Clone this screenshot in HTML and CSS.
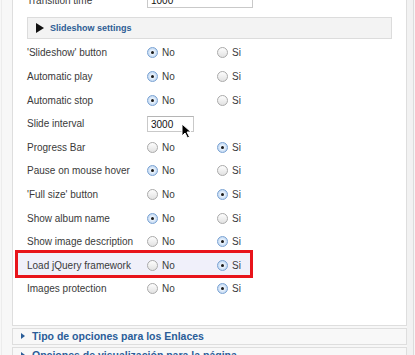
FILE: index.html
```html
<!DOCTYPE html>
<html lang="en">
<head>
    <meta charset="UTF-8">
    <meta name="viewport" content="width=device-width, initial-scale=1.0">
    <title>Slideshow settings</title>
    <link rel="stylesheet" href="styles.css">
</head>
<body>
    <div id='page'>
        <div class='gutter'></div>
        <div id='main'>
            <div class='panel'>
                <div class='row row-top'>
                    <span class='label'>Transition time</span>
                    <span class='field wide'>1000</span>
                </div>
                <div class='section-bar'><span class='tri'></span>Slideshow settings</div>
                <div class='rows'>
                    <div class='row'>
                        <span class='label'>'Slideshow' button</span>
                        <span class='opt'><span class='radio on'></span>No</span>
                        <span class='opt'><span class='radio'></span>Si</span>
                    </div>
                    <div class='row'>
                        <span class='label'>Automatic play</span>
                        <span class='opt'><span class='radio on'></span>No</span>
                        <span class='opt'><span class='radio'></span>Si</span>
                    </div>
                    <div class='row'>
                        <span class='label'>Automatic stop</span>
                        <span class='opt'><span class='radio on'></span>No</span>
                        <span class='opt'><span class='radio'></span>Si</span>
                    </div>
                    <div class='row'>
                        <span class='label'>Slide interval</span>
                        <span class='field short'>3000</span>
                        <svg class='cursor' width='11' height='16' viewBox='0 0 11 16'>
                            <path d='M1 1 L1 13 L4 10 L6.5 15 L8.5 14 L6 9 L10 9 Z' fill='#000' stroke='#fff' stroke-width='1'/>
                        </svg>
                    </div>
                    <div class='row'>
                        <span class='label'>Progress Bar</span>
                        <span class='opt'><span class='radio'></span>No</span>
                        <span class='opt'><span class='radio on'></span>Si</span>
                    </div>
                    <div class='row'>
                        <span class='label'>Pause on mouse hover</span>
                        <span class='opt'><span class='radio on'></span>No</span>
                        <span class='opt'><span class='radio'></span>Si</span>
                    </div>
                    <div class='row'>
                        <span class='label'>'Full size' button</span>
                        <span class='opt'><span class='radio'></span>No</span>
                        <span class='opt'><span class='radio on'></span>Si</span>
                    </div>
                    <div class='row'>
                        <span class='label'>Show album name</span>
                        <span class='opt'><span class='radio on'></span>No</span>
                        <span class='opt'><span class='radio'></span>Si</span>
                    </div>
                    <div class='row'>
                        <span class='label'>Show image description</span>
                        <span class='opt'><span class='radio'></span>No</span>
                        <span class='opt'><span class='radio on'></span>Si</span>
                    </div>
                    <div class='row marked'>
                        <span class='mark'></span>
                        <span class='label'>Load jQuery framework</span>
                        <span class='opt'><span class='radio'></span>No</span>
                        <span class='opt'><span class='radio on'></span>Si</span>
                    </div>
                    <div class='row'>
                        <span class='label'>Images protection</span>
                        <span class='opt'><span class='radio'></span>No</span>
                        <span class='opt'><span class='radio on'></span>Si</span>
                    </div>
                </div>
            </div>
            <div class='fold'><span class='tri-small'></span>Tipo de opciones para los Enlaces</div>
            <div class='fold'><span class='tri-small'></span>Opciones de visualización para la página</div>
        </div>
        <div class='side'></div>
    </div>
</body>
</html>
```

FILE: styles.css
```css
*{
    margin: 0;
    padding: 0;
    box-sizing: border-box;
}
body{
    background-color: #f7f7f7;
    font-family: "Liberation Sans", Arial, Helvetica, sans-serif;
    color: #3a3a3a;
    overflow: hidden;
}
#page{
    display: flex;
    height: 355px;
}
.gutter{
    width: 12px;
    border-left: 1px solid #ececec;
    margin-left: 1px;
    flex: none;
}
#main{
    width: 395px;
    margin-left: -1px;
    flex: none;
    margin-top: -12px;
}
.side{
    flex: 1;
    border-right: 1px solid #dcdcdc;
    margin-right: 1px;
    background-color: #f2f2f2;
}
.panel{
    background-color: #fff;
    border: 1px solid #dedede;
    border-top: none;
    padding: 0 14px 24px 14px;
}
.row{
    display: flex;
    align-items: center;
    height: 23.6px;
    font-size: 10px;
    position: relative;
}
.row-top{
    height: 24px;
}
.label{
    width: 120px;
    position: relative;
}
.field{
    display: inline-block;
    height: 16px;
    border: 1px solid #c9c9c9;
    border-top-color: #b5b5b5;
    background-color: #fff;
    padding: 2px 3px;
    font-size: 10px;
    line-height: 11px;
    color: #111;
}
.wide{
    width: 106px;
}
.short{
    width: 47px;
}
.cursor{
    position: absolute;
    left: 154px;
    top: 11px;
}
.section-bar{
    margin-top: 5px;
    height: 22px;
    background-color: #f3f3f3;
    border: 1px solid #dcdcdc;
    display: flex;
    align-items: center;
    padding-left: 8px;
    font-size: 9px;
    font-weight: bold;
    color: #2d5d95;
}
.tri{
    width: 0;
    height: 0;
    border-top: 5px solid transparent;
    border-bottom: 5px solid transparent;
    border-left: 8px solid #111;
    margin-right: 6px;
}
.rows{
    margin-top: 2.2px;
}
.opt{
    width: 70px;
    display: flex;
    align-items: center;
    position: relative;
}
.radio{
    width: 11px;
    height: 11px;
    border-radius: 50%;
    border: 1px solid #aaa;
    background: linear-gradient(#fdfdfd, #e2e2e2);
    margin-right: 4px;
    display: flex;
    align-items: center;
    justify-content: center;
}
.radio.on{
    border-color: #7ba3d3;
    background: radial-gradient(circle, #e9f2fc 30%, #a9c8ec 100%);
}
.radio.on::after{
    content: '';
    width: 3px;
    height: 3px;
    border-radius: 50%;
    background-color: #1a1a1a;
}
.mark{
    position: absolute;
    left: -12px;
    top: -3.6px;
    width: 238px;
    height: 28px;
    border: 3px solid #e8141b;
    background-color: #f0f0fa;
}
.fold{
    margin-top: 2px;
    height: 17px;
    background-color: #f8f8f8;
    border: 1px solid #dedede;
    display: flex;
    align-items: center;
    padding-left: 8px;
    font-size: 10.5px;
    font-weight: bold;
    color: #2a5d98;
    white-space: nowrap;
    overflow: hidden;
}
.tri-small{
    width: 0;
    height: 0;
    border-top: 3px solid transparent;
    border-bottom: 3px solid transparent;
    border-left: 4px solid #2a5d98;
    margin-right: 7px;
}
```
